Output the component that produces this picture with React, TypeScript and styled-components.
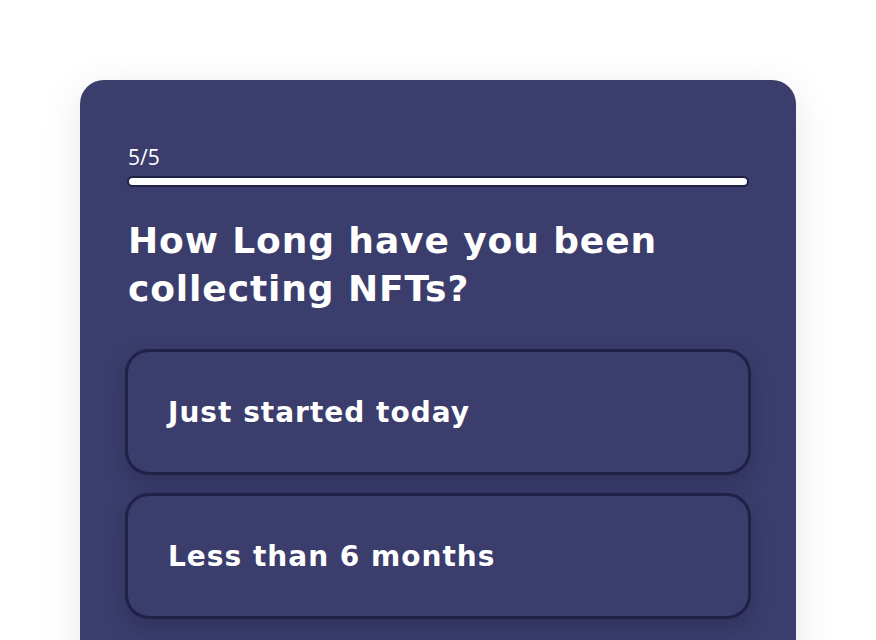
import React from "react";
import styled, { createGlobalStyle } from "styled-components";

const Global = createGlobalStyle`
  html, body { margin: 0; padding: 0; background: #ffffff; }
  body { font-family: "DejaVu Sans", "Liberation Sans", sans-serif; }
`;

const Page = styled.div`
  padding: 80px 80px 0 80px;
  height: 640px;
  box-sizing: border-box;
  overflow: hidden;
`;

const Card = styled.div`
  width: 716px;
  height: 700px;
  box-sizing: border-box;
  background: #3b3d6c;
  border-radius: 24px;
  box-shadow: 0 10px 40px rgba(0, 0, 0, 0.1);
  padding: 63px 48px 0 48px;
  display: flex;
  flex-direction: column;
`;

const Step = styled.div`
  font-family: "Open Sans", "Noto Sans", sans-serif;
  font-size: 21px;
  line-height: 28px;
  color: #ffffff;
  font-weight: 400;
`;

const Track = styled.div`
  margin: 5px -1px 0 -1px;
  height: 11px;
  box-sizing: border-box;
  border: 2px solid #1f2146;
  border-radius: 6px;
  background: #ffffff;
`;

const Question = styled.h1`
  margin: 30px 0 0 0;
  font-family: "DejaVu Sans", sans-serif;
  font-weight: 700;
  font-size: 36px;
  line-height: 48px;
  letter-spacing: 0.9px;
  color: #ffffff;
`;

const Options = styled.div`
  margin: 36px -3px 0 -3px;
  display: flex;
  flex-direction: column;
  gap: 18px;
`;

const Option = styled.button`
  all: unset;
  box-sizing: border-box;
  height: 126px;
  display: flex;
  align-items: center;
  padding: 0 40px 0 40px;
  border: 3px solid #1f2146;
  border-radius: 24px;
  background: #3b3d6c;
  box-shadow: 0 8px 18px rgba(20, 20, 50, 0.25);
  font-family: "DejaVu Sans", sans-serif;
  font-weight: 700;
  font-size: 28px;
  letter-spacing: 1px;
  color: #ffffff;
  cursor: pointer;
`;

export default function App() {
  return (
    <>
      <Global />
      <Page>
        <Card>
          <Step>5/5</Step>
          <Track />
          <Question>How Long have you been collecting NFTs?</Question>
          <Options>
            <Option>Just started today</Option>
            <Option>Less than 6 months</Option>
          </Options>
        </Card>
      </Page>
    </>
  );
}
